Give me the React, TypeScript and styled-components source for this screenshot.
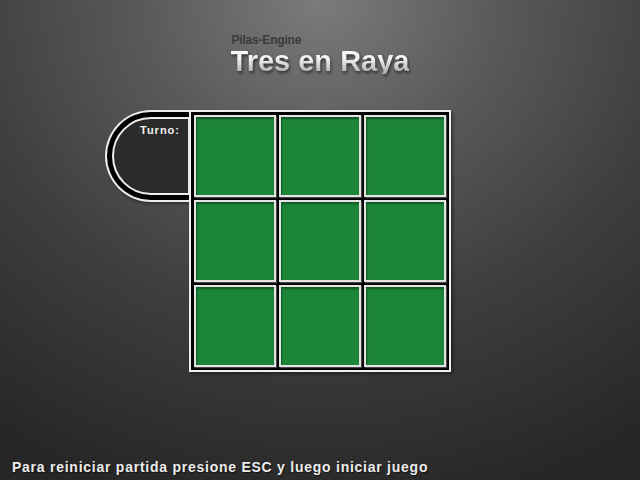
import styled, { createGlobalStyle } from 'styled-components'

const GlobalStyle = createGlobalStyle`
  html, body {
    margin: 0;
    padding: 0;
  }

  body {
    font-family: "Liberation Sans", Arial, sans-serif;
    background: #2a2a2a;
  }
`

const Page = styled.div`
  width: 640px;
  height: 480px;
  display: flex;
  overflow: hidden;
  flex-direction: column;
  background: radial-gradient(ellipse 580px 520px at 50% 0%, #7b7b7b 0%, #5a5a5a 30%, #3e3e3e 62%, #262626 100%);
`

const Header = styled.header`
  display: flex;
  padding-top: 35px;
  justify-content: center;
`

const TitleBlock = styled.div`
  display: flex;
  flex-direction: column;
  align-items: flex-start;
`

const Engine = styled.span`
  color: #3a3a3a;
  font-size: 12px;
  font-weight: bold;
  line-height: 11px;
  letter-spacing: -0.2px;
  padding-left: 1px;
`

const Title = styled.h1`
  margin: 2px 0 0;
  font-size: 29px;
  font-weight: bold;
  line-height: 26px;
  color: transparent;
  background: linear-gradient(180deg, #ffffff 0%, #f2f2f2 40%, #a8a8a8 100%);
  -webkit-background-clip: text;
  background-clip: text;
  filter: drop-shadow(1px 2px 1.5px rgba(0, 0, 0, 0.55));
`

const Stage = styled.main`
  display: grid;
  margin-top: 36px;
  grid-template-columns: 1fr 262px 1fr;
  align-items: start;
`

const TurnPanel = styled.div`
  width: 85px;
  height: 92px;
  display: flex;
  padding: 5px 0 5px 5px;
  box-sizing: border-box;
  background: #000;
  border: 2px solid #ececec;
  border-right: none;
  border-radius: 46px 0 0 46px;
  margin-right: -1px;
  justify-self: end;
  box-shadow: 1px 2px 3px rgba(0, 0, 0, 0.35);
`

const TurnInner = styled.div`
  flex: 1;
  display: flex;
  padding: 5px 8px 0 0;
  background: #2b2b2b;
  border: 2px solid #ececec;
  border-radius: 40px 0 0 40px;
  justify-content: flex-end;
  align-items: flex-start;
`

const TurnLabel = styled.span`
  color: #f0f0f0;
  font-size: 11px;
  font-weight: bold;
  line-height: 13px;
  letter-spacing: 1px;
`

const Board = styled.div`
  gap: 3px;
  display: grid;
  padding: 3px;
  background: #000;
  border: 2px solid #efefef;
  grid-template-columns: repeat(3, 82px);
  grid-template-rows: repeat(3, 82px);
  box-shadow: 2px 2px 3px rgba(0, 0, 0, 0.4);
`

const Cell = styled.div`
  box-sizing: border-box;
  background: #1c8538;
  border: 2px solid #e4e4e4;
  box-shadow: inset 1px 2px 2px rgba(0, 0, 0, 0.35), 1px 1px 1px rgba(90, 90, 90, 0.8);
`

const Footer = styled.footer`
  margin-top: auto;
  padding: 0 0 5px 12px;
  color: #ececec;
  font-size: 14px;
  font-weight: bold;
  line-height: 16px;
  letter-spacing: 0.75px;
  text-shadow: 1px 1px 1px rgba(0, 0, 0, 0.6);
`

const cells = Array.from({ length: 9 }, (_, i) => i)

const App = () => {
  return (
    <>
      <GlobalStyle />
      <Page>
        <Header>
          <TitleBlock>
            <Engine>Pilas-Engine</Engine>
            <Title>Tres en Raya</Title>
          </TitleBlock>
        </Header>

        <Stage>
          <TurnPanel>
            <TurnInner>
              <TurnLabel>Turno:</TurnLabel>
            </TurnInner>
          </TurnPanel>

          <Board>
            {cells.map((id) => (
              <Cell key={id} />
            ))}
          </Board>
        </Stage>

        <Footer>Para reiniciar partida presione ESC y luego iniciar juego</Footer>
      </Page>
    </>
  )
}

export default App
